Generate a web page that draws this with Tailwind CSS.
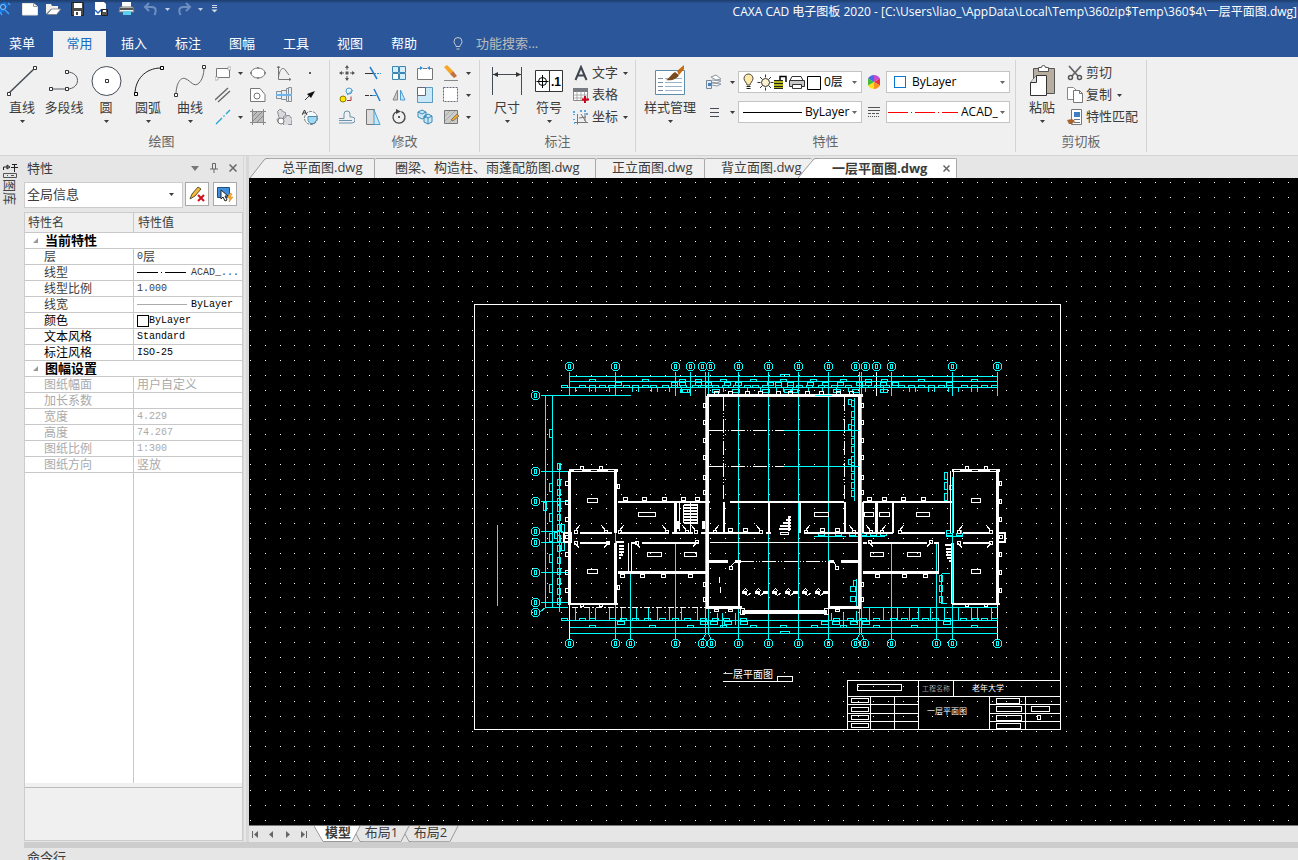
<!DOCTYPE html>
<html lang="zh-CN">
<head>
    <meta charset="UTF-8">
    <meta name="viewport" content="width=device-width, initial-scale=1.0">
    <title>CAXA CAD 电子图板 2020</title>
    <script src="https://cdn.jsdelivr.net/npm/@tailwindcss/browser@4"></script>
    <style>
        body {
            font-family: 'Open Sans', 'Noto Sans CJK SC', sans-serif;
        }
        button, select, input {
            font-family: inherit;
        }
    </style>
</head>
<body class="flex flex-col h-screen overflow-hidden bg-[#e6e6e6] text-[13px] leading-5 text-[#3c3c3c]">

    <!-- Shared symbols -->
    <svg class="hidden">
        <symbol id="caret" viewBox="0 0 5 3"><path d="M0 0h5L2.5 3z" fill="currentColor"/></symbol>
    </svg>

    <!-- Title bar -->
    <header class="shrink-0 bg-[#2b579a] text-white">
        <div class="flex items-start h-[31px] bg-linear-to-b from-[#1d3d6e] to-[#2b579a] to-[12%]">
            <div class="flex items-center h-[18px] text-[#8ea6cc]">
                <svg class="w-[12px] h-4 mr-[9px]" viewBox="0 0 12 16"><path d="M0 3l5-2 3 4-3 5-5 2" fill="#1478e0"/><circle cx="3" cy="6" r="2.500" fill="#2b579a" stroke="#8cc8ff"/><path d="M5 9l4 4M8 2l2 2M0 11l2 3" stroke="#3fa0ff" stroke-width="1.500"/></svg>
                <button aria-label="新建"><svg class="w-[18px] h-4" viewBox="0 0 18 16"><path d="M1.500 2.500h11l4 3v8.500h-15z" fill="#fff" stroke="#e8e4da"/><path d="M12.500 2.500v3h4" fill="none" stroke="#9a9a9a"/></svg></button>
                <button aria-label="打开" class="ml-1.5"><svg class="w-[18px] h-4" viewBox="0 0 18 16"><path d="M1 13V3h5l1 2h6v3H6z" fill="#f2efe8"/><path d="M2 13.500L6.500 8H16l-4.500 5.500z" fill="#fff" stroke="#77787c" stroke-width=".8"/></svg></button>
                <button aria-label="保存" class="ml-[7px]"><svg class="w-4 h-4" viewBox="0 0 16 16"><path d="M1.500 1.500h12v13h-12z" fill="#4a4a4a" stroke="#222"/><path d="M4 2h8v5H4zM4 10h7v5H4z" fill="#fff"/><path d="M6 11h2v3H6z" fill="#444"/></svg></button>
                <button aria-label="另存为" class="ml-[7px]"><svg class="w-[18px] h-4" viewBox="0 0 18 16"><path d="M2 1h9l2 2v11H2z" fill="#fff"/><path d="M2 9l3 3 3-3 3 3" fill="none" stroke="#2b67b5" stroke-width="1.500"/><path d="M8.500 8.500h6v6h-6z" fill="#555" stroke="#222"/><path d="M10 9h3v2h-3z" fill="#fff"/></svg></button>
                <button aria-label="打印" class="ml-[7px]"><svg class="w-[18px] h-4" viewBox="0 0 18 16"><path d="M4 1h9v5H4z" fill="#fff"/><path d="M2 6h13l1 5H1z" fill="#eee" stroke="#777"/><path d="M2 7h13v2H2z" fill="#555"/><path d="M5 10h8v4H5z" fill="#5ed0ef"/></svg></button>
                <button aria-label="撤销" class="ml-[7px]"><svg class="w-4 h-4" viewBox="0 0 16 16"><path d="M6 2L2 6l4 4M2.500 6h6c5 0 5 4 3 8" fill="none" stroke="#6f8fc0" stroke-width="2"/></svg></button>
                <svg class="w-[5px] h-[3px] ml-1.5 text-[#c5d0e4]"><use href="#caret"/></svg>
                <button aria-label="重做" class="ml-1.5"><svg class="w-4 h-4" viewBox="0 0 16 16"><path d="M10 2l4 4-4 4M13.500 6h-6c-5 0-5 4-3 8" fill="none" stroke="#6f8fc0" stroke-width="2"/></svg></button>
                <svg class="w-[5px] h-[3px] ml-1.5 text-[#c5d0e4]"><use href="#caret"/></svg>
                <svg class="w-[7px] h-2 ml-2" viewBox="0 0 7 8"><path d="M1 .5h5M1 2.500h5" stroke="#d4dae6"/><path d="M.5 4.500h6l-3 3z" fill="#d4dae6"/></svg>
            </div>
            <h1 class="ml-auto pr-px text-xs leading-6 whitespace-nowrap">CAXA CAD 电子图板 2020 - [C:\Users\liao_\AppData\Local\Temp\360zip$Temp\360$4\一层平面图.dwg]</h1>
        </div>
        <nav class="flex h-[26px]">
            <button class="w-11 mr-[9px] pb-[3px]">菜单</button>
            <button class="w-[53px] mr-px pb-[3px] bg-[#f0f0f0] text-[#1a6cc0]">常用</button>
            <button class="w-[54px] pb-[3px]">插入</button>
            <button class="w-[54px] pb-[3px]">标注</button>
            <button class="w-[54px] pb-[3px]">图幅</button>
            <button class="w-[54px] pb-[3px]">工具</button>
            <button class="w-[54px] pb-[3px]">视图</button>
            <button class="w-[54px] pb-[3px]">帮助</button>
            <label class="flex items-center ml-[21px] pb-[3px]">
                <svg class="w-3 h-4 mr-3" viewBox="0 0 12 16"><path d="M4 11.500C4 9.500 2 9 2 6.500a4 4 0 018 0c0 2.500-2 3-2 5zM4.500 14h3" fill="none" stroke="#c8c8c8"/></svg>
                <input type="text" aria-label="功能搜索" placeholder="功能搜索..." class="w-32 bg-transparent outline-none placeholder:text-[#bcbcbc]">
            </label>
        </nav>
    </header>

    <!-- Ribbon -->
    <section class="flex shrink-0 h-[99px] pt-[3px] bg-[#f0f0f0] border-b border-[#d4d4d4]">
        <div class="flex flex-col h-[92px] w-[330px] pt-[2px] border-r border-[#d4d4d4]">
            <div class="flex h-[70px] pl-px">
                <button class="flex flex-col items-center w-[42px] pt-[3px]">
                    <svg class="w-8 h-8" viewBox="0 0 32 32"><path d="M3 28L29 3" stroke="#444b55" stroke-width="1.500"/><path d="M1.500 27.500h3v3h-3zM27.500 1.500h3v3h-3z" fill="#fff" stroke="#333"/></svg>
                    <span>直线</span>
                    <svg class="w-[5px] h-[3px] mt-[3px]"><use href="#caret"/></svg>
                </button>
                <button class="flex flex-col items-center w-[42px] pt-[3px]">
                    <svg class="w-8 h-8" viewBox="0 0 32 32"><path d="M3 24h16c14 0 14-17 0-17" fill="none" stroke="#555b64"/><path d="M1.500 22.500h3v3h-3zM17.500 22.500h3v3h-3zM17.500 5.500h3v3h-3z" fill="#fff" stroke="#333"/></svg>
                    <span class="whitespace-nowrap">多段线</span>
                </button>
                <button class="flex flex-col items-center w-[42px] pt-[3px]">
                    <svg class="w-8 h-8" viewBox="0 0 32 32"><circle cx="16.500" cy="16" r="14.500" fill="#fff" stroke="#444b55"/><path d="M15.500 14.500h3v3h-3z" fill="#fff" stroke="#333"/></svg>
                    <span>圆</span>
                    <svg class="w-[5px] h-[3px] mt-[3px]"><use href="#caret"/></svg>
                </button>
                <button class="flex flex-col items-center w-[42px] pt-[3px]">
                    <svg class="w-8 h-8" viewBox="0 0 32 32"><path d="M3 29C3 15 13 3 29 3" fill="none" stroke="#222"/><path d="M2.500 27.500h3v3h-3zM28.500 1.500h3v3h-3z" fill="#fff" stroke="#000"/></svg>
                    <span>圆弧</span>
                    <svg class="w-[5px] h-[3px] mt-[3px]"><use href="#caret"/></svg>
                </button>
                <button class="flex flex-col items-center w-[42px] pt-[3px]">
                    <svg class="w-8 h-8" viewBox="0 0 32 32"><path d="M2 30C2 18 7 11 12 14c5 2 8 9 13 4 3-3 5-8 5-16" fill="none" stroke="#666"/><path d="M.5 28.500h3v3h-3zM28.500 .5h3v3h-3z" fill="#fff" stroke="#333"/></svg>
                    <span>曲线</span>
                    <svg class="w-[5px] h-[3px] mt-[3px]"><use href="#caret"/></svg>
                </button>
                <div class="grid grid-cols-[35px_26px_26px_26px] grid-rows-[22px_22px_22px] items-center ml-1">
                    <button aria-label="矩形" class="flex items-center"><svg class="w-4 h-4" viewBox="0 0 16 16"><path d="M1.500 3.500h13v9h-13z" fill="#fff" stroke="#777"/><path d="M0 12h3v3H0zM13 2h3v3h-3z" fill="#fff" stroke="#999" stroke-width=".7"/></svg><svg class="w-[5px] h-[3px] ml-[7px]"><use href="#caret"/></svg></button>
                    <button aria-label="椭圆"><svg class="w-4 h-4" viewBox="0 0 16 16"><ellipse cx="8" cy="8" rx="7" ry="5" fill="#fff" stroke="#777"/><path d="M7 2h2v2H7zM7 12h2v2H7zM0 7h2v2H0zM14 7h2v2h-2z" fill="#888"/></svg></button>
                    <button aria-label="公式曲线"><svg class="w-4 h-4" viewBox="0 0 16 16"><path d="M2.500 1v13.500H15M1 3l1.500-2L4 3M13 13l2 1.500-2 1M2.500 12C4 2 8 2 10 6l3 4" fill="none" stroke="#777"/></svg></button>
                    <button aria-label="点"><svg class="w-4 h-4" viewBox="0 0 16 16"><path d="M7 7h2v2H7z" fill="#555b6b"/></svg></button>
                    <button aria-label="平行线" class="flex items-center"><svg class="w-4 h-4" viewBox="0 0 16 16"><path d="M0 13L13 1M3 15L15 4" stroke="#666" stroke-width="1.300"/></svg></button>
                    <button aria-label="孔"><svg class="w-4 h-4" viewBox="0 0 16 16"><path d="M.5 14.500v-13H10l5 6v7z" fill="#fff" stroke="#777"/><circle cx="7" cy="9" r="3" fill="#fff" stroke="#777"/></svg></button>
                    <button aria-label="轴"><svg class="w-4 h-4" viewBox="0 0 16 16"><path d="M.5 4.500h5v7h-5zM5.500 3.500h5v9h-5zM10.500 1.500h2v13h-2zM12.500 .5h3v14h-3z" fill="#e4eef5" stroke="#8a8f96"/><path d="M0 8h16" stroke="#6fb4ea" stroke-width="2"/></svg></button>
                    <button aria-label="箭头"><svg class="w-4 h-4" viewBox="0 0 16 16"><path d="M3 13l5-5" stroke="#333"/><path d="M13 4L9 11 5 7z" fill="#111"/></svg></button>
                    <button aria-label="中心线" class="flex items-center"><svg class="w-4 h-4" viewBox="0 0 16 16"><path d="M1 15l6-6M8.500 7.500l1-1M11 5l4-4" stroke="#1ba1d8" stroke-width="1.200"/></svg><svg class="w-[5px] h-[3px] ml-[7px]"><use href="#caret"/></svg></button>
                    <button aria-label="剖面线"><svg class="w-4 h-4" viewBox="0 0 16 16"><path d="M2.500 2.500h11v11h-11z" fill="#bcbcbc"/><path d="M2.500 0v16M13.500 0v16M0 2.500h16M0 13.500h16M3 7l4-4M3 12l9-9M7 13l6-6" stroke="#888" fill="none"/></svg></button>
                    <button aria-label="齿轮"><svg class="w-4 h-4" viewBox="0 0 16 16"><path d="M1.500 2.500l2-2h2l1 2 3 1v3l-2 1v2l2-1 1-2h3l1 2 2 1-1 4 1 2h-4l-1 1H8l-2-4-4 1-1-3 2-2z" fill="#d9d9de" stroke="#8b8b94"/><circle cx="5" cy="12" r="3" fill="#fff" stroke="#777"/></svg></button>
                    <button aria-label="局部放大"><svg class="w-4 h-4" viewBox="0 0 16 16"><circle cx="9" cy="9" r="6.500" fill="#f4fbff" stroke="#777" stroke-dasharray="3 1"/><path d="M6 7.500h9v3l-3 4H8l-2-3z" fill="#9fdaf5" stroke="#58a"/><path d="M0 6l2.500-5L5 6M1 4h3" fill="none" stroke="#333"/></svg></button>
                </div>
            </div>
            <h2 class="-ml-1.5 leading-[18px] text-center text-[#666]">绘图</h2>
        </div>

        <div class="flex flex-col h-[92px] w-[150px] pt-[2px] border-r border-[#d4d4d4]">
            <div class="grid grid-cols-[26px_26px_26px_26px_26px_8px] grid-rows-[22px_22px_22px] h-[70px] pl-1 justify-items-center items-center content-start">
                <button aria-label="平移"><svg class="w-4 h-4" viewBox="0 0 16 16"><path d="M8 1v14M1 8h14" stroke="#555" stroke-dasharray="4 2 2 2 4"/><path d="M8 0l2 3H6zM8 16l2-3H6zM0 8l3-2v4zM16 8l-3-2v4zM6.500 6.500h3v3h-3z" fill="#555"/></svg></button>
                <button aria-label="裁剪"><svg class="w-4 h-4" viewBox="0 0 16 16"><path d="M0 8.500h8" stroke="#333"/><path d="M9 8.500h7" stroke="#2b8fd9" stroke-dasharray="2 1"/><path d="M5 2l7 12" stroke="#2b7fd0" stroke-width="1.500"/></svg></button>
                <button aria-label="阵列"><svg class="w-4 h-4" viewBox="0 0 16 16"><path d="M1.500 1.500h6v6h-6zM8.500 1.500h6v6h-6zM8.500 8.500h6v6h-6z" fill="#d5eefb" stroke="#3a87b5"/><path d="M1.500 8.500h6v6h-6z" fill="#fff" stroke="#3a87b5"/></svg></button>
                <button aria-label="打断"><svg class="w-4 h-4" viewBox="0 0 16 16"><path d="M4 3.500H.5v11h15v-11H12M6 3.500h4" fill="#fff" stroke="#777"/><path d="M3 1l3 2-3 2zM13 1l-3 2 3 2z" fill="#2b8fd9"/></svg></button>
                <button aria-label="删除"><svg class="w-4 h-4" viewBox="0 0 16 16"><path d="M1 2l3-2 6 6-3 3z" fill="#f5a623"/><path d="M7 9l3-3 4 5-3 2z" fill="#c0713e"/><path d="M1 15.500h14" stroke="#888"/></svg></button>
                <svg class="w-[5px] h-[3px]"><use href="#caret"/></svg>
                <button aria-label="平移复制"><svg class="w-4 h-4" viewBox="0 0 16 16"><circle cx="4" cy="12" r="3" fill="#ffe600" stroke="#8a7a00"/><circle cx="10" cy="4" r="3" fill="#e1f3fd" stroke="#4a9dd0"/><path d="M8 8l6-5" fill="none" stroke="#4a9dd0"/><path d="M8 13.500h4V9.500" fill="none" stroke="#a33"/></svg></button>
                <button aria-label="延伸"><svg class="w-4 h-4" viewBox="0 0 16 16"><path d="M0 8.500h7" stroke="#333" stroke-dasharray="4 1 2"/><path d="M7 8.500h4" stroke="#2b8fd9"/><path d="M9 2l6 12" stroke="#2b7fd0" stroke-width="1.500"/></svg></button>
                <button aria-label="镜像"><svg class="w-4 h-4" viewBox="0 0 16 16"><path d="M6.500 3v10H2z" fill="#ccc" stroke="#888"/><path d="M9.500 3v10H14z" fill="#c6e8f9" stroke="#4a9dd0"/></svg></button>
                <button aria-label="缩放"><svg class="w-4 h-4" viewBox="0 0 16 16"><path d="M.5.5h15v15H.5z" fill="#c9e9f9" stroke="#5a9bc2"/><path d="M.5.5h8v8h-8z" fill="#fff" stroke="#667"/></svg></button>
                <button aria-label="分解"><svg class="w-4 h-4" viewBox="0 0 16 16"><path d="M.5.5h14v14H.5z" fill="#fff" stroke="#667" stroke-dasharray="2 1"/></svg></button>
                <svg class="w-[5px] h-[3px]"><use href="#caret"/></svg>
                <button aria-label="等距线"><svg class="w-4 h-4" viewBox="0 0 16 16"><path d="M0 9.500h5V5a3 3 0 016 0v3h2a3 3 0 010 6H0M0 11.500h13" fill="none" stroke="#6a94ad"/></svg></button>
                <button aria-label="拉伸"><svg class="w-4 h-4" viewBox="0 0 16 16"><path d="M1.500.5h8v15h-8z" fill="#ddd" stroke="#777"/><path d="M9 1l6 14.500H9z" fill="#c9e9f9" stroke="#4a9dd0"/></svg></button>
                <button aria-label="旋转"><svg class="w-4 h-4" viewBox="0 0 16 16"><path d="M6 2.500a6 6 0 104.500.2" fill="none" stroke="#444" stroke-width="1.300"/><path d="M5 0l5 2.500L5 5z" fill="#444"/><circle cx="8" cy="8" r="1" fill="#222"/></svg></button>
                <button aria-label="块"><svg class="w-4 h-4" viewBox="0 0 16 16"><path d="M1 3l4-2 4 2v5L5 10 1 8zM7 7l4-2 4 2v6l-4 2-4-2z" fill="#c9e9f9" stroke="#3a87b5"/><path d="M7 7l4 2 4-2M11 9v6M1 3l4 2 4-2" fill="none" stroke="#3a87b5"/></svg></button>
                <button aria-label="填充编辑"><svg class="w-4 h-4" viewBox="0 0 16 16"><path d="M1.500 1.500h13v13h-13z" fill="#ccc" stroke="#777"/><path d="M2 7l5-5M2 12L12 2M6 14l8-8" stroke="#aaa"/><path d="M8 11l6-6 2 2-6 5z" fill="#f0a830" stroke="#875"/></svg></button>
                <svg class="w-[5px] h-[3px]"><use href="#caret"/></svg>
            </div>
            <h2 class="leading-[18px] text-center text-[#666]">修改</h2>
        </div>

        <div class="flex flex-col h-[92px] w-[156px] pt-[2px] border-r border-[#d4d4d4]">
            <div class="flex h-[70px] pl-1.5">
                <button class="flex flex-col items-center w-[42px] pt-[3px]">
                    <svg class="w-8 h-8" viewBox="0 0 32 32"><path d="M1.500 2v28M30.500 2v28M2 9.500h28" stroke="#444b55" fill="none"/><path d="M2 9.500l5-2.500v5zM30 9.500L25 7v5z" fill="#333"/></svg>
                    <span>尺寸</span>
                    <svg class="w-[5px] h-[3px] mt-[3px]"><use href="#caret"/></svg>
                </button>
                <button class="flex flex-col items-center w-[42px] pt-[3px]">
                    <svg class="w-8 h-8" viewBox="0 0 32 32"><path d="M2.500 5.500h27v21h-27zM16.500 5.500v21" fill="#fff" stroke="#333"/><circle cx="9.500" cy="16.500" r="4" fill="none" stroke="#000"/><path d="M9.500 10v13M3.500 16.500h12" stroke="#000"/><text x="18" y="20.500" font-size="12" font-weight="700" font-family="Liberation Sans">.1</text></svg>
                    <span>符号</span>
                    <svg class="w-[5px] h-[3px] mt-[3px]"><use href="#caret"/></svg>
                </button>
                <div class="flex flex-col pl-[3px]">
                    <button class="flex items-center h-[22px]"><svg class="w-4 h-4 mr-[3px]" viewBox="0 0 16 16"><path d="M2.500 15L8 2l5.500 13M4.500 10.500h7" fill="none" stroke="#3f4650" stroke-width="2"/></svg><span class="pb-0.5">文字</span><svg class="w-[5px] h-[3px] ml-[5px]"><use href="#caret"/></svg></button>
                    <button class="flex items-center h-[22px]"><svg class="w-4 h-4 mr-[3px]" viewBox="0 0 16 16"><path d="M.5 1.500h14v12H.5z" fill="#fff" stroke="#888"/><path d="M0 1h15v4H0z" fill="#777b84"/><path d="M.5 8h14M.5 11h14M4 4v9M8 4v9M11.500 4v9" stroke="#999" stroke-width=".8"/><path d="M12 9v7M9 12.500h7" stroke="#d0021b" stroke-width="2"/></svg><span class="pb-0.5">表格</span></button>
                    <button class="flex items-center h-[22px]"><svg class="w-4 h-4 mr-[3px]" viewBox="0 0 16 16"><path d="M4.500 5v10.500M2 13.500h13M8 5l5 8M6 9l7-1M12 4v8" fill="none" stroke="#777"/><path d="M1 5v1M1 10v1M1 14h1M7 2h2M11 2h2M0 3h2M14 4v2" stroke="#2b8fd9" stroke-width="1.500"/></svg><span class="pb-0.5">坐标</span><svg class="w-[5px] h-[3px] ml-[5px]"><use href="#caret"/></svg></button>
                </div>
            </div>
            <h2 class="leading-[18px] text-center text-[#666]">标注</h2>
        </div>

        <div class="flex flex-col h-[92px] w-[380px] pt-[2px] border-r border-[#d4d4d4]">
            <div class="flex h-[70px]">
                <button class="flex flex-col items-center w-[68px] pt-[3px]">
                    <svg class="w-8 h-8" viewBox="0 0 32 32"><path d="M1.500 5.500h29v24h-29z" fill="#fff" stroke="#5d8ba8"/><path d="M4 13.500h5M4 17.500h5M4 21.500h5M4 25.500h5" stroke="#7a8aa0"/><path d="M11 13.500h17M11 17.500h17M11 21.500h17M11 25.500h17" stroke="#9ab4cc"/><path d="M23 6l7-6v4l-5 6z" fill="#c76a12"/><path d="M12 15c3-1 5-6 9-8l4 3c-2 4-7 6-13 5z" fill="#7a4a20"/></svg>
                    <span>样式管理</span>
                    <svg class="w-[5px] h-[3px] mt-[3px]"><use href="#caret"/></svg>
                </button>
                <div class="grid grid-cols-[34px_124px_24px_124px] grid-rows-[22px_22px] gap-y-2 items-center content-start pt-[9px]">
                    <button aria-label="图层" class="flex items-center pl-0.5"><svg class="w-4 h-4 mr-1.5" viewBox="0 0 16 16"><path d="M5 3l5-2 5 4-5 1zM6 6l9 1-4 2-6-1M6 9l9 1-4 2-5-1" fill="#fff" stroke="#8a96a3"/><path d="M.5 6.500h5v8h-5z" fill="#dfeefa" stroke="#789"/><path d="M2 9h3v3H2z" fill="#4a7fb5"/></svg><svg class="w-[5px] h-[3px] ml-0.5"><use href="#caret"/></svg></button>
                    <div class="flex items-center h-[22px] pl-[3px] pr-1 bg-white border border-[#c4c4c4] text-black">
                        <svg class="shrink-0 w-[82px] h-[18px]" viewBox="0 0 82 18">
                            <path d="M5 12C5 10 2 8 2 5.500a4.500 4.500 0 019 0C11 8 8 10 8 12z" fill="#ffe9a8" stroke="#444"/><path d="M4.500 13.500h4M4.500 15.500h4" stroke="#222"/>
                            <circle cx="23.500" cy="9.500" r="4" fill="#fff3cf" stroke="#333"/><path d="M23.500 1.500v3M23.500 14.500v3M15.500 9.500h3M28.500 9.500h3M18 4l2 2M27 13l2 2M29 4l-2 2M20 13l-2 2" stroke="#333"/>
                            <path d="M32 7h9v9h-9z" fill="#b4b41c"/><path d="M32 7.500h9M32 10.500h9M32 13.500h9M32 15.500h9" stroke="#222"/><path d="M38 7V3.500h6V9" stroke="#000" fill="none" stroke-width="1.500"/>
                            <path d="M50 3.500h9l2 4H48z" fill="#fff" stroke="#333"/><path d="M47.500 7.500h15v6h-15z" fill="#c8c8c8" stroke="#333"/><path d="M50.500 11.500h9v4h-9z" fill="#fff" stroke="#333"/>
                            <path d="M65.500 3.500h13v13h-13z" fill="#fff" stroke="#000"/>
                        </svg>
                        <select aria-label="当前层" class="appearance-none w-full text-xs outline-none"><option>0层</option></select>
                        <svg class="shrink-0 w-[5px] h-[3px] text-[#666]"><use href="#caret"/></svg>
                    </div>
                    <button aria-label="颜色" class="justify-self-center"><svg class="w-[14px] h-[14px]" viewBox="0 0 14 14"><path d="M7 7V0a7 7 0 016 3.500z" fill="#c84bd8"/><path d="M7 7l6-3.500v7z" fill="#e7303c"/><path d="M7 7l6 3.500A7 7 0 017 14z" fill="#f7941d"/><path d="M7 7v7a7 7 0 01-6-3.500z" fill="#ffe01b"/><path d="M7 7l-6 3.500v-7z" fill="#3ebd3a"/><path d="M7 7L1 3.500A7 7 0 017 0z" fill="#4a6ee0"/></svg></button>
                    <div class="flex items-center h-[22px] pl-[7px] pr-1 bg-white border border-[#c4c4c4] text-black">
                        <span class="shrink-0 size-3 mr-1.5 border border-[#0a78d0]"></span>
                        <select aria-label="颜色" class="appearance-none w-full text-xs outline-none"><option>ByLayer</option></select>
                        <svg class="shrink-0 w-[5px] h-[3px] text-[#666]"><use href="#caret"/></svg>
                    </div>
                    <button aria-label="线宽" class="flex items-center pl-0.5"><svg class="w-4 h-4 mr-1.5" viewBox="0 0 16 16"><path d="M4 4.500h9M4 8.500h9M4 12.500h9" stroke="#444b55"/></svg><svg class="w-[5px] h-[3px] ml-0.5"><use href="#caret"/></svg></button>
                    <div class="flex items-center h-[22px] pl-1 pr-1 bg-white border border-[#c4c4c4] text-black">
                        <span class="shrink-0 w-[59px] h-px mr-[3px] bg-black"></span>
                        <select aria-label="线宽" class="appearance-none w-full text-xs outline-none"><option>ByLayer</option></select>
                        <svg class="shrink-0 w-[5px] h-[3px] text-[#666]"><use href="#caret"/></svg>
                    </div>
                    <button aria-label="线型" class="justify-self-center"><svg class="w-3 h-3" viewBox="0 0 12 12" shape-rendering="crispEdges"><path d="M0 1.500h12M0 4.500h12" stroke="#555"/><path d="M0 7.500h12" stroke="#555" stroke-dasharray="3 1"/><path d="M0 10.500h12" stroke="#555" stroke-dasharray="1 1"/></svg></button>
                    <div class="flex items-center h-[22px] pl-px pr-1 bg-white border border-[#c4c4c4] text-black">
                        <svg class="shrink-0 w-[70px] h-px mr-[3px]" viewBox="0 0 70 1"><path d="M0 .5h70" stroke="#f00" stroke-dasharray="20 3 1 3"/></svg>
                        <select aria-label="线型" class="appearance-none w-full text-xs outline-none"><option>ACAD_</option></select>
                        <svg class="shrink-0 w-[5px] h-[3px] text-[#666]"><use href="#caret"/></svg>
                    </div>
                </div>
            </div>
            <h2 class="leading-[18px] text-center text-[#666]">特性</h2>
        </div>

        <div class="flex flex-col h-[92px] w-[131px] pt-[2px] border-r border-[#d4d4d4]">
            <div class="flex h-[70px] pl-[5px]">
                <button class="flex flex-col items-center w-[42px] pt-[3px]">
                    <svg class="w-8 h-8" viewBox="0 0 32 32"><path d="M7.500 3.500h21v25h-21z" fill="#b8aea0" stroke="#555"/><path d="M12.500 2.500h3a2 2 0 014 0h3v4h-10z" fill="#fff" stroke="#555"/><path d="M4.500 17.500l6-7h10v20h-16z" fill="#fff" stroke="#333"/><path d="M4.500 17.500h6v-7" fill="#ddd" stroke="#333"/></svg>
                    <span>粘贴</span>
                    <svg class="w-[5px] h-[3px] mt-[3px]"><use href="#caret"/></svg>
                </button>
                <div class="flex flex-col pl-1">
                    <button class="flex items-center h-[22px]"><svg class="w-4 h-4 mr-[3px]" viewBox="0 0 16 16"><path d="M2 1l9 10M14 1L5 11" stroke="#666" stroke-width="1.800"/><circle cx="3.500" cy="12.500" r="2" fill="none" stroke="#555" stroke-width="1.500"/><circle cx="12.500" cy="12.500" r="2" fill="none" stroke="#555" stroke-width="1.500"/></svg><span class="pb-0.5">剪切</span></button>
                    <button class="flex items-center h-[22px]"><svg class="w-4 h-4 mr-[3px]" viewBox="0 0 16 16"><path d="M.5.5h6l3 3v9h-9z" fill="#fff" stroke="#888"/><path d="M6.500 3.500h6l3 3v9h-9z" fill="#fff" stroke="#777"/><path d="M12.500 3.500v3h3" fill="none" stroke="#777"/></svg><span class="pb-0.5">复制</span><svg class="w-[5px] h-[3px] ml-[5px]"><use href="#caret"/></svg></button>
                    <button class="flex items-center h-[22px]"><svg class="w-4 h-4 mr-[3px]" viewBox="0 0 16 16"><path d="M4.500.5h10v15h-10z" fill="#fff" stroke="#777"/><path d="M7 3h6v5H7z" fill="#3f7fc4"/><path d="M7 10.500h6M7 13.500h6" stroke="#678"/><path d="M0 11l5-1 3 2-3 3H2z" fill="#a8642c"/></svg><span class="pb-0.5">特性匹配</span></button>
                </div>
            </div>
            <h2 class="leading-[18px] text-center text-[#666]">剪切板</h2>
        </div>
    </section>

    <main class="flex flex-1 min-h-0">
        <!-- Library strip -->
        <aside class="flex flex-col items-center shrink-0 w-6 pt-[7px] pr-1">
            <svg class="w-4 h-4" viewBox="0 0 16 16"><path d="M1.500 7V4h5M5 2l3 2-3 2zM10 1.500h5M12.500 2v7M9 4.500h7" fill="none" stroke="#222"/><path d="M1.500 10.500h13v4h-13zM5 12.500h1M9 12.500h3" fill="none" stroke="#555"/></svg>
            <button class="text-[13px] leading-4 text-[#444] [writing-mode:vertical-rl] [text-orientation:sideways]">图库</button>
        </aside>

        <!-- Property panel -->
        <section class="flex flex-col shrink-0 w-[219px]">
            <div class="flex items-center h-6 pl-[3px] pr-1.5">
                <h2>特性</h2>
                <svg class="w-2 h-[5px] ml-auto mr-[3px] text-[#777]" viewBox="0 0 8 5"><path d="M0 0h8L4 5z" fill="currentColor"/></svg>
                <svg class="w-2 h-[10px] ml-2" viewBox="0 0 8 10"><path d="M2.500 6V.5h3V6M0 6h8M4 6v4" fill="none" stroke="#666"/></svg>
                <button aria-label="关闭面板" class="ml-[11px]"><svg class="w-2 h-2" viewBox="0 0 8 8"><path d="M.5.5l7 7M7.500.5l-7 7" stroke="#666" stroke-width="1.500"/></svg></button>
            </div>
            <div class="flex h-[26px] mt-0.5 gap-0.5">
                <div class="flex items-center w-[159px] pl-0.5 pr-2 pb-0.5 bg-white border border-[#ccc]">
                    <select aria-label="选择对象" class="appearance-none w-full outline-none"><option>全局信息</option></select>
                    <svg class="shrink-0 w-[5px] h-[3px]"><use href="#caret"/></svg>
                </div>
                <button aria-label="清除" class="grid place-items-center w-6 h-6 bg-white border border-[#aaa]"><svg class="w-4 h-4" viewBox="0 0 16 16"><path d="M1 13l2-5 6-7 3 2-6 7z" fill="#f6b83c" stroke="#553"/><path d="M9 9l6 6M15 9l-6 6" stroke="#d0101c" stroke-width="2"/></svg></button>
                <button aria-label="拾取" class="grid place-items-center w-6 h-6 ml-0.5 bg-white border border-[#aaa]"><svg class="w-4 h-4" viewBox="0 0 16 16"><path d="M.5 1.500h12v10H.5z" fill="#3f8fdc" stroke="#1b4f8c"/><path d="M4 4v9l2-2 2 4 2-1-2-4h3z" fill="#fff" stroke="#222"/><path d="M13 7l-3 5h3l-1 4 4-5h-3l2-3z" fill="#ffb52e" stroke="#c07000" stroke-width=".5"/></svg></button>
            </div>
            <div class="flex flex-col flex-1 min-h-0 mt-1 mb-px border border-[#ccc] bg-white text-xs leading-[15px]">
                <table class="w-full table-fixed border-separate border-spacing-0">
                    <thead>
                        <tr class="bg-[#f0f0f0] text-left">
                            <th class="w-[109px] h-5 pl-[3px] font-normal border-b border-r border-[#c8c8c8]">特性名</th>
                            <th class="h-5 pl-1 font-normal border-b border-[#c8c8c8]">特性值</th>
                        </tr>
                    </thead>
                    <tbody id="props"></tbody>
                </table>
                <div class="flex flex-1 min-h-0"><div class="w-[109px] border-r border-[#c8c8c8]"></div></div>
                <div class="h-[57px] border-t-4 border-[#f0f0f0] bg-[#f0f0f0]"><div class="h-full border-t border-[#bbb]"></div></div>
            </div>
        </section>

        <div class="shrink-0 w-1.5 border-l border-[#d8d8d8] border-r-3 border-r-[#d8d8d8]"></div>

        <!-- Drawing area -->
        <section class="flex flex-col flex-1 min-w-0">
            <div class="flex shrink-0 h-[22px] pt-0.5">
                <svg class="shrink-0 w-5 h-5" viewBox="0 0 20 20"><path d="M1 20L16 1h4v19z" fill="#f0f0f0"/><path d="M1 20L15 2l2-1.500h3" fill="none" stroke="#999"/></svg>
                <button class="w-[106px] pl-[13px] pb-1 text-left leading-4 whitespace-nowrap bg-[#f0f0f0] border-t border-r border-[#aaa] rounded-tr-xs">总平面图.dwg</button>
                <button class="w-[221px] pl-5 pb-1 text-left leading-4 whitespace-nowrap bg-[#f0f0f0] border-t border-r border-[#aaa] rounded-t-xs">圈梁、构造柱、雨蓬配筋图.dwg</button>
                <button class="w-[109px] pl-4 pb-1 text-left leading-4 whitespace-nowrap bg-[#f0f0f0] border-t border-r border-[#aaa] rounded-t-xs">正立面图.dwg</button>
                <button class="w-[107px] pl-4 pb-1 text-left leading-4 whitespace-nowrap bg-[#f0f0f0] border-t border-[#aaa] rounded-t-xs">背立面图.dwg</button>
                <svg class="shrink-0 w-5 h-5 -ml-3.5" viewBox="0 0 20 20"><path d="M0 20L16 1h4v19z" fill="#fff"/><path d="M0 20L15 2l2-1.500h3" fill="none" stroke="#999"/></svg>
                <div class="flex items-center w-[139px] pl-3.5 pb-px bg-white border-t border-r border-[#aaa] rounded-tr-xs">
                    <button class="font-bold">一层平面图.dwg</button>
                    <button aria-label="关闭" class="ml-auto mr-1.5"><svg class="w-[7px] h-[7px]" viewBox="0 0 7 7"><path d="M.5.5l6 6M6.500.5l-6 6" stroke="#666" stroke-width="1.500"/></svg></button>
                </div>
            </div>

            <div class="flex-1 min-h-0 bg-black overflow-hidden">
                <svg class="block w-full h-full" role="img" aria-label="一层平面图">
                    <g transform="translate(-249 -178)">
                        <g id="plan" transform="translate(.5 .5)" fill="none" stroke-linecap="butt" shape-rendering="crispEdges"></g>
                        <g fill="#fff" font-family="'Noto Sans CJK SC', sans-serif">
                            <text x="723" y="678" font-size="10">一层平面图</text>
                            <text x="922" y="691" font-size="7" fill="#999">工程名称</text>
                            <text x="972" y="691" font-size="8">老年大学</text>
                            <text x="927" y="714" font-size="8">一层平面图</text>
                        </g>
                    </g>
                </svg>
            </div>

            <div class="flex shrink-0 h-[17px] border-t border-[#777]">
                <div class="flex items-center w-[65px] pl-[3px] gap-[9px]">
                    <button aria-label="第一页"><svg class="w-[7px] h-[7px]" viewBox="0 0 7 7"><path d="M0 0h1v7H0zM6 0v7L2 3.500z" fill="#666"/></svg></button>
                    <button aria-label="上一页"><svg class="w-[7px] h-[7px]" viewBox="0 0 7 7"><path d="M5 0v7L1 3.500z" fill="#666"/></svg></button>
                    <button aria-label="下一页"><svg class="w-[7px] h-[7px]" viewBox="0 0 7 7"><path d="M2 0v7l4-3.500z" fill="#666"/></svg></button>
                    <button aria-label="最后一页"><svg class="w-[7px] h-[7px]" viewBox="0 0 7 7"><path d="M6 0h1v7H6zM1 0v7l4-3.500z" fill="#666"/></svg></button>
                </div>
                <svg class="w-2.5 h-4" viewBox="0 0 10 16"><path d="M0 0h10v16H9z" fill="#fff"/><path d="M0 0l9 15.500h1" fill="none" stroke="#999"/></svg>
                <button class="w-[28px] pb-0.5 bg-white border-b border-[#999] font-bold leading-[11px]">模型</button>
                <svg class="w-2.5 h-4" viewBox="0 0 10 16"><path d="M0 0h8L0 16z" fill="#fff"/><path d="M0 15.500L8 0M4 8l4 7.500h2" fill="none" stroke="#999"/></svg>
                <button class="w-[39px] pb-0.5 border-b border-[#aaa] leading-[11px]">布局1</button>
                <svg class="w-2.5 h-4" viewBox="0 0 10 16"><path d="M0 15.500L8 0M4 8l4 7.500h2" fill="none" stroke="#999"/></svg>
                <button class="w-[39px] pb-0.5 border-b border-[#aaa] leading-[11px]">布局2</button>
                <svg class="w-2.5 h-4" viewBox="0 0 10 16"><path d="M0 15.500L8 0" fill="none" stroke="#999"/></svg>
            </div>
        </section>
    </main>

    <!-- Command line -->
    <footer class="shrink-0 h-[18px] pl-6 overflow-hidden">
        <div class="h-1.5 bg-[#cdcdcd]"></div>
        <p class="pl-[3px] leading-[18px]">命令行</p>
    </footer>

    <script>
        // --- Property grid ---
        const line = (dash, color) => `<svg class="shrink-0 w-[50px] h-px mr-1" viewBox="0 0 50 1"><path d="M0 .5h50" stroke="${color}" stroke-dasharray="${dash}"/></svg>`;
        const mono = (text) => `<span class="font-['Liberation_Mono'] text-[10px]">${text}</span>`;
        const rows = [
            ['当前特性'],
            ['层', mono('0') + '层', 'text-[#3c3c3c]'],
            ['线型', line('21 3 1 3', '#000') + mono('ACAD_...'), 'text-[#3c3c3c]'],
            ['线型比例', mono('1.000'), 'text-[#3c3c3c]'],
            ['线宽', line('none', '#aaa') + `<span class="flex text-black">${mono('ByLayer')}</span>`, 'text-[#3c3c3c]'],
            ['颜色', '<span class="w-3 h-3 border border-black"></span>' + mono('ByLayer'), 'text-black'],
            ['文本风格', mono('Standard'), 'text-black'],
            ['标注风格', mono('ISO-25'), 'text-black'],
            ['图幅设置'],
            ['图纸幅面', '用户自定义', 'text-[#aaa]'],
            ['加长系数', '', 'text-[#aaa]'],
            ['宽度', mono('4.229'), 'text-[#aaa]'],
            ['高度', mono('74.267'), 'text-[#aaa]'],
            ['图纸比例', mono('1:300'), 'text-[#aaa]'],
            ['图纸方向', '竖放', 'text-[#aaa]'],
        ];
        document.getElementById('props').innerHTML = rows.map(([name, value, color]) => value === undefined
            ? `<tr><th colspan="2" class="border-b border-[#c8c8c8] text-black"><div class="flex items-center h-[15px] pl-2 gap-[7px] text-[13px]"><svg class="w-[5px] h-[5px]" viewBox="0 0 5 5"><path d="M5 0v5H0z" fill="#999"/></svg>${name}</div></th></tr>`
            : `<tr class="${color}"><td class="border-b border-r border-[#c8c8c8]"><div class="flex items-center h-[15px] pl-[19px]">${name}</div></td><td class="border-b border-[#c8c8c8]"><div class="flex items-center h-[15px] pl-[3px] whitespace-nowrap">${value}</div></td></tr>`
        ).join('');

        // --- Floor plan ---
        const plan = document.getElementById('plan');
        const CYAN = '#00ffff';
        const WHITE = '#ffffff';

        function draw(d, color, width = 1, dash = '') {
            const path = document.createElementNS('http://www.w3.org/2000/svg', 'path');
            path.setAttribute('d', d);
            path.setAttribute('stroke', color);
            path.setAttribute('stroke-width', width);
            if (dash) path.setAttribute('stroke-dasharray', dash);
            plan.appendChild(path);
        }
        const seg = (list) => list.map(([a, b, c, d]) => `M${a} ${b}L${c} ${d}`).join('');
        const box = (list) => list.map(([x, y, w, h]) => `M${x} ${y}h${w}v${h}h${-w}z`).join('');
        const row = (xs, y, w, h) => box(xs.map((x) => [x, y, w, h]));
        const col = (x, ys, w, h) => box(ys.map((y) => [x, y, w, h]));

        // grid dots
        let dots = '';
        for (let i = 0; i < 150; i++) {
            for (let j = 0; j < 90; j++) {
                dots += `M${250 + Math.round(i * 14.833)} ${182 + Math.round(j * 14.837)}m-.5 0h1`;
            }
        }
        draw(dots, WHITE);

        // sheet frame and title block
        draw(box([[474, 304, 586, 425], [847, 680, 213, 49], [857, 684, 44, 6], [777, 676, 15, 5]]), WHITE);
        draw(seg([
            [722, 681, 776, 681], [847, 696, 1060, 696], [918, 680, 918, 729], [953, 680, 953, 696],
            [989, 696, 989, 729], [1025, 696, 1025, 729], [870, 696, 870, 729], [894, 696, 894, 729],
            [847, 704, 918, 704], [847, 713, 918, 713], [847, 721, 918, 721],
            [989, 704, 1060, 704], [989, 713, 1060, 713], [989, 721, 1060, 721],
        ]), WHITE);
        draw(col(851, [698, 707, 715, 723], 17, 4) + box([[996, 698, 23, 5], [996, 706, 25, 5], [996, 715, 25, 5], [996, 723, 24, 5], [1031, 706, 18, 5], [1037, 715, 3, 4]]), WHITE);

        // axis bubbles
        const topAxes = [569, 615, 675, 690, 702, 710, 738, 768, 798, 828, 855, 865, 876, 891, 952, 997];
        const bottomAxes = [569, 615, 630, 675, 702, 711, 738, 768, 798, 828, 855, 864, 891, 936, 952, 997];
        const leftAxes = [395, 471, 501, 531, 542, 572, 602, 612];
        const bubble = (x, y) => `M${x - 2} ${y - 4}h4l2 2v4l-2 2h-4l-2-2v-4zM${x - 1} ${y - 2}h2v4h-2z`;
        draw(topAxes.map((x) => bubble(x, 366)).join('') + bottomAxes.map((x) => bubble(x, 643)).join('') + leftAxes.map((y) => bubble(535, y)).join(''), CYAN);

        // axis lines
        draw(seg([569, 615, 675, 690, 891, 952, 997].map((x) => [x, 371, x, 395])), CYAN);
        draw(seg([738, 768, 798, 828].map((x) => [x, 371, x, 639])), CYAN);
        draw(seg([[615, 532, 615, 639], [630, 572, 630, 639], [675, 542, 675, 639], [891, 542, 891, 639], [936, 542, 936, 639], [952, 476, 952, 639], [705, 371, 705, 634], [708, 371, 708, 634], [859, 371, 859, 634], [861, 371, 861, 634], [705, 634, 702, 639], [708, 634, 711, 639], [859, 634, 856, 639], [861, 634, 864, 639]]), CYAN);
        draw(seg([[569, 604, 569, 639], [997, 604, 997, 639], [876, 371, 876, 395]]), WHITE);
        draw(seg([
            [569, 376, 997, 376], [569, 381, 997, 381], [561, 387, 997, 387],
            [561, 620, 997, 620], [569, 627, 997, 627], [569, 633, 997, 633], [862, 607, 997, 607],
            [540, 395, 630, 395], [540, 471, 567, 471], [540, 501, 568, 501], [540, 531, 562, 531],
            [540, 542, 568, 542], [540, 572, 568, 572], [540, 602, 568, 602], [540, 611, 545, 607], [545, 607, 567, 607],
            [545, 395, 545, 607], [552, 395, 552, 607], [559, 462, 559, 611], [497, 524, 497, 605],
        ]), CYAN);
        draw('M571 607H706', WHITE, 1, '6 2 2 2');

        // dimension texts and ticks
        draw(row([561, 579, 589, 599, 608, 623, 632, 642, 650, 662, 671, 680, 692, 700, 712, 722, 733, 744, 752, 762, 775, 787, 796, 806, 818, 831, 845, 862, 874, 883, 898, 908, 918, 928, 938, 946, 961, 971, 981, 991], 385, 6, 2), CYAN);
        draw(row([589, 642, 679, 695, 720, 750, 780, 810, 840, 865, 881, 918, 971], 379, 6, 2) + row([780], 374, 9, 2), CYAN);
        draw(row([671, 679, 695, 705, 724, 735, 767, 775, 787, 807, 822, 837, 856, 865, 880, 892, 946, 615], 382, 6, 3) + row([680, 682, 712, 732, 762, 784, 790, 833, 852, 880], 389, 7, 3), CYAN);
        draw(seg([569, 575, 589, 595, 609, 615, 632, 638, 651, 657, 669, 681, 723, 747, 760, 776, 783, 792, 808, 822, 836, 848, 865, 883, 909, 915, 928, 934, 948, 958, 971, 977].map((x) => [x, 387, x, 391])), CYAN);
        draw(seg([575, 589, 595, 609, 621, 636, 648, 657, 669, 681, 697, 869, 883, 897, 909, 918, 930, 944, 958, 971, 977, 991].map((x) => [x, 607, x, 620])), CYAN);
        draw(row([561, 579, 589, 609, 620, 632, 644, 659, 672, 684, 700, 712, 723, 740, 833, 847, 860, 873, 890, 901, 912, 922, 932, 944, 960, 972, 981, 991], 618, 6, 2) + row([589, 649, 687, 720, 750, 780, 811, 840, 873, 911, 971], 625, 6, 2) + row([780], 631, 9, 2), CYAN);
        draw(row([617, 700, 710, 724, 740, 821, 832, 850, 862, 943], 621, 7, 3), CYAN);
        draw(seg([[717, 612, 717, 620], [722, 612, 722, 626], [735, 612, 735, 624], [831, 612, 831, 620], [843, 612, 843, 626], [856, 610, 856, 622]]), CYAN);
        draw(col(549, [429, 483, 513, 533, 554, 584], 3, 8) + col(557, [463, 479, 489, 498, 505, 514, 524, 535, 545, 557, 568, 578, 588, 598], 3, 6) + box([[543, 502, 3, 8], [554, 532, 3, 6], [561, 524, 3, 8], [561, 542, 3, 8]]), CYAN);
        draw('M854 397V500' + col(851, [400, 411, 419, 430, 438, 446, 456, 465, 473, 482, 490], 3, 6) + col(848, [399, 424, 459], 3, 5), CYAN);
        draw('M947 471V500' + col(944, [472, 482, 493], 3, 7) + 'M941 573V603M941 573h8M941 603h5' + col(939, [575, 585, 596], 3, 6) + 'M856 578V605' + col(850, [586, 596], 5, 5) + box([[853, 580, 3, 6], [949, 485, 3, 4]]), CYAN);
        draw('M813 536H845M848 536H884M945 536H962' + row([818, 835, 849, 860, 870, 880, 946, 956], 533, 6, 2) + row([946, 957], 530, 4, 3), CYAN);

        // structural walls
        draw(seg([
            [568, 470, 617, 470], [569, 470, 569, 604], [615, 470, 615, 532], [615, 542, 615, 604],
            [951, 470, 999, 470], [997, 470, 997, 604],
            [706, 395, 862, 395], [707, 395, 707, 608], [859, 395, 859, 608],
            [617, 572, 706, 572], [862, 572, 938, 572],
            [675, 501, 675, 532], [708, 561, 727, 561], [734, 561, 740, 561], [840, 561, 860, 561], [828, 561, 833, 561],
            [708, 607, 741, 607], [828, 607, 860, 607], [876, 501, 876, 532],
        ]), WHITE, 3);
        draw(seg([[741, 611, 826, 611]]), WHITE, 4);
        draw(seg([
            [617, 501, 709, 501], [729, 501, 843, 501], [862, 501, 951, 501],
            [579, 532, 611, 532], [619, 532, 668, 532], [671, 532, 692, 532], [700, 532, 758, 532], [765, 532, 770, 532], [803, 532, 860, 532], [863, 532, 892, 532], [900, 532, 944, 532], [962, 532, 988, 532],
            [579, 542, 608, 542], [641, 542, 697, 542], [630, 542, 636, 542], [862, 542, 866, 542], [871, 542, 926, 542], [933, 542, 938, 542], [962, 542, 988, 542],
            [568, 603, 617, 603], [951, 603, 999, 603], [723, 501, 723, 532], [768, 501, 768, 532], [799, 501, 799, 532], [844, 501, 844, 532], [862, 501, 862, 532], [892, 501, 892, 532],
            [738, 561, 738, 607], [828, 561, 828, 607],
        ]), WHITE, 2);
        draw(seg([[628, 542, 628, 572], [631, 542, 631, 572], [950, 470, 950, 532], [953, 470, 953, 532], [938, 542, 938, 572], [951, 542, 951, 603], [953, 542, 953, 603], [709, 542, 860, 542]]), WHITE);
        draw('M739 561H828M723 396V500M844 396V500M708 430H783M708 466H783', WHITE, 1, '14 2 1 2 1 2');
        draw('M783 430H858M783 466H858M814 395H831', CYAN);
        draw('M573 470h8M590 470h6M607 470h6M953 470h6M971 470h6M989 470h6', '#000');

        // window marks
        draw(row([714, 728, 745, 758, 776, 788, 805, 819, 836, 849], 391, 4, 3) + col(703, [403, 420, 438, 455, 475, 490, 582, 597], 2, 4) + col(861, [403, 420, 438, 455, 475, 490, 582, 597], 2, 4)
            + row([580, 599, 965, 984], 466, 3, 3) + row([580, 599, 965, 984], 604, 3, 2) + col(565, [481, 500, 517, 552, 570, 588], 3, 4) + col(999, [481, 499, 517, 552, 570, 588], 2, 4)
            + row([623, 642, 662, 681, 695, 867, 882, 901, 921], 497, 4, 3) + row([620, 640, 661, 688, 875, 902, 923], 574, 4, 3) + col(617, [484, 585], 2, 4)
            + row([714, 728, 835], 609, 4, 2) + row([820, 835, 728, 743], 528, 4, 3), WHITE);
        draw(box([[563, 532, 7, 9], [997, 532, 7, 9]]), WHITE, 2);
        draw(box([[740, 608, 4, 6], [824, 608, 4, 6]]), WHITE);
        draw(col(565, [535], 3, 3) + col(999, [535], 3, 3), WHITE);

        // doors
        const doors = [[575, 530, 1], [605, 530, -1], [619, 530, 1], [666, 530, -1], [686, 530, -1], [695, 530, -1], [714, 530, 1], [760, 530, -1], [805, 530, 1], [853, 530, -1], [870, 530, -1], [881, 530, 1], [899, 530, 1], [958, 530, 1], [990, 530, -1]];
        const lower = [[575, 542, 1], [607, 542, -1], [636, 542, 1], [696, 541, -1], [869, 541, 1], [930, 541, -1], [958, 542, 1], [990, 542, -1]];
        draw(doors.map(([x, y, s]) => `M${x - 1} ${y}h3v3h-3zM${x} ${y}l${4 * s} -5`).join(''), WHITE);
        draw(lower.map(([x, y, s]) => `M${x - 1} ${y - 1}h3v3h-3zM${x} ${y + 1}l${s * 4} 5`).join(''), WHITE);
        draw('M730 566l5-5M729 566h3v3h-3zM833 561l3 5M835 566h3v3h-3zM719 576v6M720 586v6', WHITE);

        // rooms
        draw(box([
            [587, 498, 10, 4], [638, 512, 17, 4], [647, 552, 14, 4], [684, 552, 12, 4], [587, 569, 10, 4],
            [814, 512, 14, 4], [864, 512, 9, 4], [879, 512, 10, 4], [916, 512, 13, 4], [870, 552, 13, 4],
            [907, 552, 13, 4], [971, 498, 9, 4], [971, 569, 9, 4],
        ]), WHITE);

        // stairs
        draw(seg([[690, 501, 690, 531], [679, 502, 679, 530], [683, 504, 683, 522], [697, 504, 697, 522]]), WHITE);
        draw('M683 504h14M683 507h14M683 510h14M683 513h14M683 516h14M683 519h14M683 522h14', WHITE, 2);
        draw('M678 520v8M703 520v8', WHITE, 3);
        draw('M615 541h8M618 545h5M618 548h5M618 551h5M618 554h4M618 557h2', WHITE, 2);
        draw('M944 544h6M945 548h6M945 551h6M945 554h6M946 557h5M948 560h3', WHITE, 2);
        draw('M788 516h2M785 519h5M782 522h8M779 525h11M778 528h12M788 515v15', WHITE, 2);
        draw('M780 532h8v2h-8z', WHITE);

        // entrance curtain wall
        draw('M741 592H828', WHITE, 3, '5 8 5 3 5 4');
        draw([745, 758, 775, 788, 805, 818].map((x) => `M${x - 3} 591l3-3 3 3M${x - 1} 593l3 2 4-3`).join(''), WHITE);
    </script>
</body>
</html>
